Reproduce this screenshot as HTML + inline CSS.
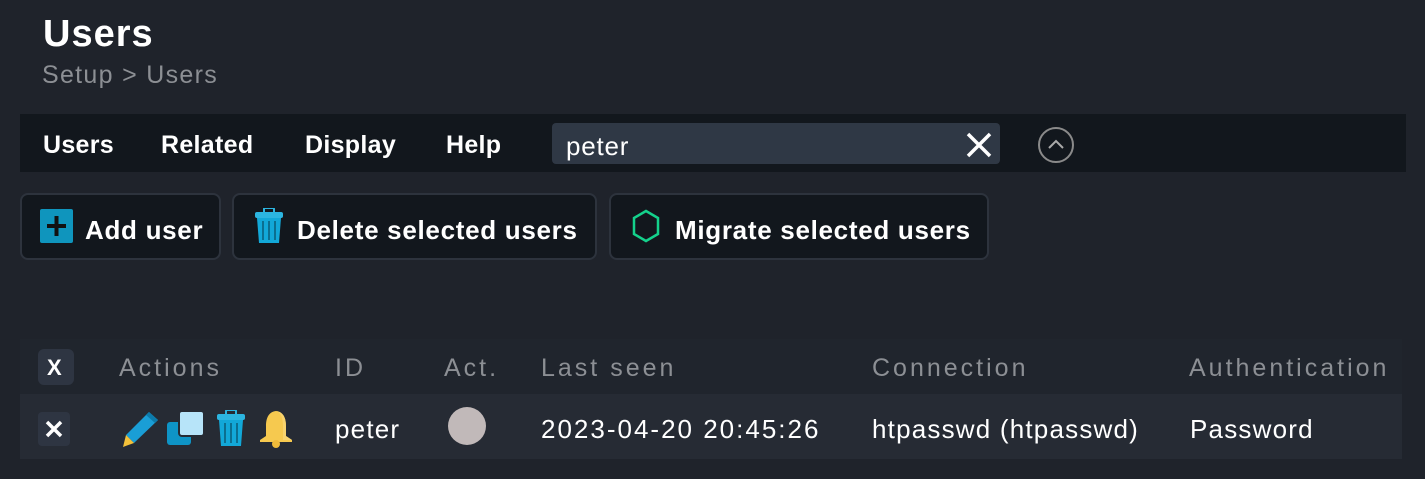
<!DOCTYPE html>
<html><head><meta charset="utf-8"><style>
*{margin:0;padding:0;box-sizing:border-box}
body{width:1425px;height:479px;background:#1f232b;font-family:"Liberation Sans","DejaVu Sans",sans-serif;color:#fff;position:relative;overflow:hidden}
.abs{position:absolute;white-space:nowrap}
h1{position:absolute;left:43px;top:14px;font-size:38px;font-weight:bold;line-height:40px;letter-spacing:1px}
.bc{left:42px;top:61px;font-size:25px;color:#8c8f94;letter-spacing:1.3px}
.menu{left:20px;top:114px;width:1386px;height:58px;background:#12171d}
.mi{top:131px;font-size:25px;font-weight:bold;letter-spacing:0.3px}
.search{left:552px;top:123px;width:448px;height:41px;background:#2f3845;border-radius:4px}
.btn{top:193px;height:67px;background:#12171d;border:2px solid #2d333d;border-radius:8px}
.bt{top:215px;font-size:26px;font-weight:bold;letter-spacing:0.7px}
.th{left:20px;top:339px;width:1382px;height:55px;background:#20252d}
.tr{left:20px;top:394px;width:1382px;height:65px;background:#262b34}
.hc{top:354px;font-size:25px;color:#8c8f94;letter-spacing:3px}
.dc{top:414px;font-size:26px;letter-spacing:1.2px}
</style></head><body>
<h1>Users</h1>
<div class="abs bc">Setup &gt; Users</div>
<div class="abs menu"></div>
<div class="abs mi" style="left:43px">Users</div>
<div class="abs mi" style="left:161px">Related</div>
<div class="abs mi" style="left:305px">Display</div>
<div class="abs mi" style="left:446px">Help</div>
<div class="abs search"></div>
<div class="abs" style="left:566px;top:131px;font-size:26px;letter-spacing:0.8px">peter</div>
<svg class="abs" style="left:965px;top:131px" width="28" height="28"><path d="M3 3L25 25M25 3L3 25" stroke="#fff" stroke-width="3.5"/></svg>
<svg class="abs" style="left:1037px;top:126px" width="38" height="38"><circle cx="19" cy="19" r="17" fill="none" stroke="#8a8a8a" stroke-width="2"/><path d="M12 22L19 15L26 22" fill="none" stroke="#aaa" stroke-width="2"/></svg>

<div class="abs btn" style="left:20px;width:201px"></div>
<div class="abs btn" style="left:232px;width:365px"></div>
<div class="abs btn" style="left:609px;width:380px"></div>
<svg class="abs" style="left:40px;top:209px" width="33" height="34"><rect width="33" height="34" rx="2" fill="#0f95bd"/><path d="M16.5 7V27M7 17H26" stroke="#111" stroke-width="4"/></svg>
<div class="abs bt" style="left:85px">Add user</div>
<svg class="abs" style="left:254px;top:208px" width="30" height="36"><rect x="10" y="0" width="10" height="5" rx="1" fill="none" stroke="#2cb5e0" stroke-width="2"/><rect x="1" y="4" width="28" height="6" rx="2" fill="#2cb5e0"/><path d="M3 10H27L25 35H5Z" fill="#12a8d8"/><path d="M9 13V32M15 13V32M21 13V32" stroke="#0b6f90" stroke-width="2"/></svg>
<div class="abs bt" style="left:297px">Delete selected users</div>
<svg class="abs" style="left:631px;top:209px" width="30" height="34"><path d="M15 2L27 9V25L15 32L3 25V9Z" fill="none" stroke="#14d18c" stroke-width="2.5"/></svg>
<div class="abs bt" style="left:675px">Migrate selected users</div>

<div class="abs th"></div>
<div class="abs tr"></div>
<div class="abs" style="left:38px;top:349px;width:36px;height:36px;background:#2e3542;border-radius:6px"></div>
<div class="abs" style="left:47px;top:355px;font-size:22px;font-weight:bold">X</div>
<div class="abs hc" style="left:119px">Actions</div>
<div class="abs hc" style="left:335px">ID</div>
<div class="abs hc" style="left:444px">Act.</div>
<div class="abs hc" style="left:541px">Last seen</div>
<div class="abs hc" style="left:872px">Connection</div>
<div class="abs hc" style="left:1189px">Authentication</div>

<div class="abs" style="left:38px;top:412px;width:32px;height:34px;background:#2e3542;border-radius:4px"></div>
<svg class="abs" style="left:44px;top:419px" width="20" height="20"><path d="M3 3L17 17M17 3L3 17" stroke="#fff" stroke-width="3.5"/></svg>
<svg class="abs" style="left:122px;top:410px" width="38" height="38"><path d="M27 2L36 10L12 33L4 25Z" fill="#1a9ed6"/><path d="M27 2L36 10L33 13L24 5Z" fill="#0c7bab"/><path d="M4 25L12 33L1 37Z" fill="#f3c13a"/></svg>
<svg class="abs" style="left:167px;top:410px" width="38" height="36"><rect x="0" y="12" width="24" height="23" rx="3" fill="#0e94c6"/><rect x="12" y="1" width="25" height="25" rx="3" fill="#b7e4f9" stroke="#262b34" stroke-width="2"/></svg>
<svg class="abs" style="left:216px;top:410px" width="30" height="38"><rect x="10" y="0" width="10" height="5" rx="1" fill="none" stroke="#2cb5e0" stroke-width="2"/><rect x="1" y="4" width="28" height="6" rx="2" fill="#2cb5e0"/><path d="M3 10H27L25 36H5Z" fill="#12a8d8"/><path d="M9 13V33M15 13V33M21 13V33" stroke="#0b6f90" stroke-width="2"/></svg>
<svg class="abs" style="left:258px;top:410px" width="36" height="38"><path d="M18 1C10 2 8 9 8 16V26L2 30V32H34V30L28 26V16C28 9 26 2 18 1Z" fill="#f6c94f"/><path d="M18 1C23 2 25 9 25 16V30H34V30L28 26V16C28 9 26 2 18 1Z" fill="#f8d36e"/><circle cx="18" cy="34" r="4" fill="#efbb3a"/></svg>
<div class="abs dc" style="left:335px">peter</div>
<div class="abs" style="left:448px;top:407px;width:38px;height:38px;border-radius:50%;background:#c1b9b9"></div>
<div class="abs dc" style="left:541px;letter-spacing:2px">2023-04-20 20:45:26</div>
<div class="abs dc" style="left:872px">htpasswd (htpasswd)</div>
<div class="abs dc" style="left:1190px">Password</div>
</body></html>
